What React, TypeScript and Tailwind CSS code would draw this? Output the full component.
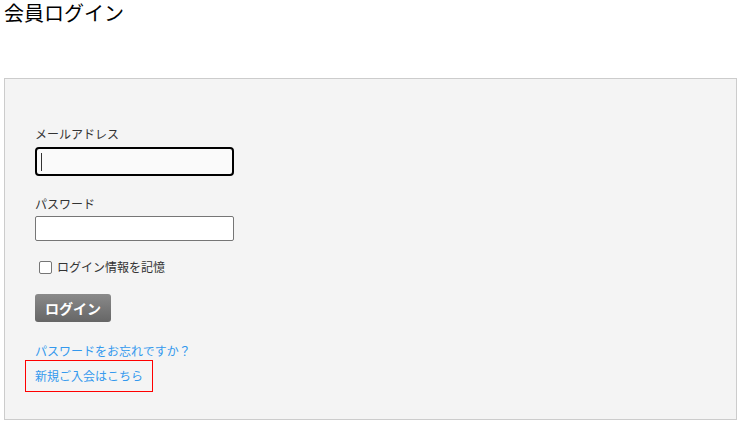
import React from "react";

export default function App() {
  const jp = { fontFamily: '"Noto Sans CJK JP", "Noto Sans", sans-serif' };
  return (
    <div className="w-[740px] h-[430px] bg-white text-[#333] overflow-hidden" style={jp}>
      <h1 className="pl-[4px] text-[20px] leading-[26px] text-black font-normal">会員ログイン</h1>
      <div className="mt-[52px] ml-[4px] w-[733px] h-[342px] border border-[#cccccc] bg-[#f4f4f4] pl-[30px] pt-[46px]">
        <div className="text-[12px] leading-[18px] text-[#333]">メールアドレス</div>
        <div className="mt-[4px] w-[199px] h-[29px] rounded-[4px] border-2 border-black bg-[#fafafa] flex items-center pl-[4px]">
          <div className="w-[1px] h-[18px] bg-[#333]" />
        </div>
        <div className="mt-[19px] text-[12px] leading-[18px] text-[#333]">パスワード</div>
        <div className="mt-[3px] w-[199px] h-[25px] rounded-[2px] border border-[#767676] bg-white" />
        <div className="mt-[19px] ml-[4px] flex items-center h-[14px]">
          <div className="w-[13px] h-[13px] rounded-[2px] border border-[#767676] bg-white" />
          <span className="ml-[5px] text-[12px] leading-[14px] text-[#333]">ログイン情報を記憶</span>
        </div>
        <div className="mt-[20px] w-[76px] h-[28px] rounded-[3px] bg-gradient-to-b from-[#8a8a8a] to-[#666666] flex items-center justify-center text-white text-[14px] font-bold">
          ログイン
        </div>
        <div className="mt-[20px] text-[12px] leading-[18px] text-[#3399ee]">パスワードをお忘れですか？</div>
        <div className="-ml-[10px] w-[128px] h-[32px] border border-[#ff0000] flex items-center pl-[9px] text-[12px] text-[#3399ee]">
          新規ご入会はこちら
        </div>
      </div>
    </div>
  );
}
